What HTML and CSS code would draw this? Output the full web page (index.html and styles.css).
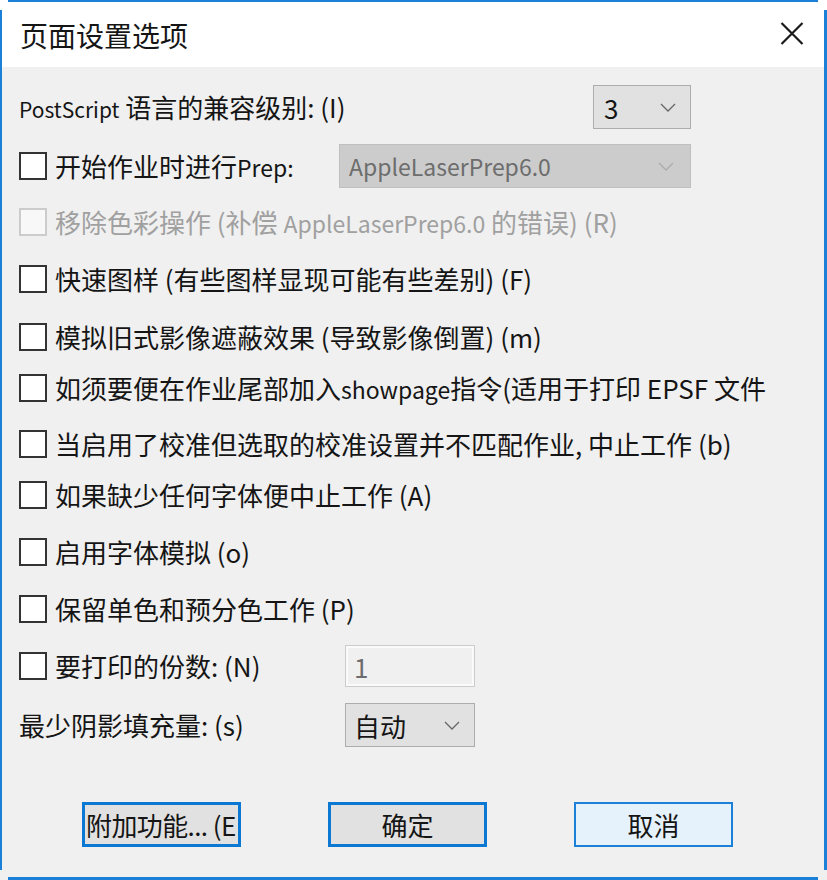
FILE: index.html
```html
<!DOCTYPE html>
<html lang="zh-CN">
<head>
<meta charset="utf-8">
<title>页面设置选项</title>
<link rel="stylesheet" href="styles.css">
</head>
<body>
<div class="window">
  <div class="titlebar">
    <span class="title">页面设置选项</span>
    <svg class="close" width="24" height="23" viewBox="0 0 24 23"><path d="M1.5 1 L22.5 22 M22.5 1 L1.5 22" stroke="#1a1a1a" stroke-width="2.2" fill="none"/></svg>
  </div>
  <div class="content">
    <div class="row">
      <span class="label"><span class="en-s">PostScript</span> 语言的兼容级别: (I)</span>
      <div class="select sel-level"><span>3</span><svg class="chev" width="16" height="9" viewBox="0 0 16 9"><polyline points="1,1 8,8 15,1" fill="none" stroke="#666" stroke-width="1.3"/></svg></div>
    </div>
    <div class="row mt15">
      <span class="cb"></span><span class="label">开始作业时进行<span class="en">Prep:</span></span>
      <div class="select sel-prep disabled"><span class="en">AppleLaserPrep6.0</span><svg class="chev" width="16" height="9" viewBox="0 0 16 9"><polyline points="1,1 8,8 15,1" fill="none" stroke="#adadad" stroke-width="1.3"/></svg></div>
    </div>
    <div class="row mt12 off">
      <span class="cb"></span><span class="label">移除色彩操作 (补偿 <span class="en">AppleLaserPrep6.0</span> 的错误) (R)</span>
    </div>
    <div class="row mt13">
      <span class="cb"></span><span class="label">快速图样 (有些图样显现可能有些差别) (F)</span>
    </div>
    <div class="row mt14">
      <span class="cb"></span><span class="label">模拟旧式影像遮蔽效果 (导致影像倒置) (m)</span>
    </div>
    <div class="row mt7">
      <span class="cb"></span><span class="label">如须要便在作业尾部加入<span class="en">showpage</span>指令(适用于打印 EPSF 文件</span>
    </div>
    <div class="row mt12">
      <span class="cb"></span><span class="label">当启用了校准但选取的校准设置并不匹配作业, 中止工作 (b)</span>
    </div>
    <div class="row mt7">
      <span class="cb"></span><span class="label">如果缺少任何字体便中止工作 (A)</span>
    </div>
    <div class="row mt13">
      <span class="cb"></span><span class="label">启用字体模拟 (o)</span>
    </div>
    <div class="row mt13">
      <span class="cb"></span><span class="label">保留单色和预分色工作 (P)</span>
    </div>
    <div class="row mt13">
      <span class="cb"></span><span class="label lbl-cb-fixed">要打印的份数: (N)</span>
      <div class="input">1</div>
    </div>
    <div class="row mt15">
      <span class="label lbl-fixed">最少阴影填充量: (s)</span>
      <div class="select sel-shade"><span>自动</span><svg class="chev" width="16" height="9" viewBox="0 0 16 9"><polyline points="1,1 8,8 15,1" fill="none" stroke="#666" stroke-width="1.3"/></svg></div>
    </div>
  </div>
  <div class="buttons">
    <div class="btn btn-default btn-left">附加功能... (E</div>
    <div class="btn btn-default">确定</div>
    <div class="btn btn-hover">取消</div>
  </div>
</div>
</body>
</html>
```
FILE: styles.css
```css
html, body {
  margin: 0;
  padding: 0;
  background: #ffffff;
}

body {
  font-family: "Noto Sans CJK SC", sans-serif;
  color: #151515;
}

.window {
  position: relative;
  width: 827px;
  height: 880px;
  background: #f0f0f0;
  display: flex;
  flex-direction: column;
  overflow: hidden;
}

.window::before {
  content: "";
  position: absolute;
  left: 8px;
  right: 9px;
  top: 0;
  bottom: 0;
  border-top: 2px solid #1a80d8;
  border-bottom: 3px solid #1a80d8;
  pointer-events: none;
}

.window::after {
  content: "";
  position: absolute;
  left: 0;
  right: 0;
  top: 10px;
  bottom: 10px;
  border-left: 2px solid #1a80d8;
  border-right: 3px solid #1a80d8;
  pointer-events: none;
}

.titlebar {
  height: 67px;
  background: #ffffff;
  display: flex;
  align-items: center;
  justify-content: space-between;
  padding: 2px 23px 0 20px;
  box-sizing: border-box;
}

.title {
  font-size: 28px;
  line-height: 1;
  color: #151515;
}

.close {
  display: block;
  margin-top: -3px;
}

.content {
  padding: 18px 0 0 19px;
  width: 691px;
  box-sizing: border-box;
  display: flex;
  flex-direction: column;
}

.row {
  height: 44px;
  display: flex;
  align-items: center;
  font-size: 26px;
  white-space: nowrap;
}

.mt7 { margin-top: 7px; }
.mt12 { margin-top: 12px; }
.mt13 { margin-top: 13px; }
.mt14 { margin-top: 14px; }
.mt15 { margin-top: 15px; }

.label {
  line-height: 1;
}

.en {
  font-size: 23px;
}

.en-s {
  font-size: 21px;
}

.cb {
  width: 28px;
  height: 28px;
  box-sizing: border-box;
  border: 2px solid #333;
  background: #ffffff;
  margin-right: 8px;
  flex: none;
}

.off .label {
  color: #a0a0a0;
}

.off .cb {
  border-color: #cccccc;
  background: #f8f8f8;
}

.lbl-cb-fixed {
  width: 290px;
}

.lbl-fixed {
  width: 326px;
}

.select {
  height: 44px;
  box-sizing: border-box;
  border: 1px solid #adadad;
  background: #e1e1e1;
  display: flex;
  align-items: center;
  justify-content: space-between;
  padding: 0 14px 0 10px;
  font-size: 26px;
  color: #151515;
}

.sel-level {
  width: 98px;
  margin-left: auto;
}

.sel-prep {
  width: 352px;
  margin-left: auto;
  padding-left: 9px;
  padding-right: 16px;
}

.sel-shade {
  width: 130px;
  padding-left: 8px;
}

.select.disabled {
  background: #cccccc;
  border-color: #bfbfbf;
  color: #6d6d6d;
}

.input {
  width: 130px;
  height: 42px;
  box-sizing: border-box;
  border: 1px solid #cccccc;
  box-shadow: inset 0 0 0 2px #fafafa;
  background: #f0f0f0;
  color: #6d6d6d;
  font-size: 26px;
  display: flex;
  align-items: center;
  padding-left: 8px;
}

.buttons {
  display: flex;
  gap: 87px;
  padding-left: 82px;
  margin-top: 55px;
}

.btn {
  width: 159px;
  height: 45px;
  box-sizing: border-box;
  display: flex;
  align-items: center;
  justify-content: center;
  font-size: 26px;
  color: #151515;
  white-space: nowrap;
  overflow: hidden;
}

.btn-default {
  background: #e1e1e1;
  border: 3px solid #0b78d4;
}

.btn-left {
  justify-content: flex-start;
  letter-spacing: -0.6px;
  padding-left: 1px;
}

.btn-hover {
  background: #e5f1fb;
  border: 2px solid #1a80d8;
}
```
